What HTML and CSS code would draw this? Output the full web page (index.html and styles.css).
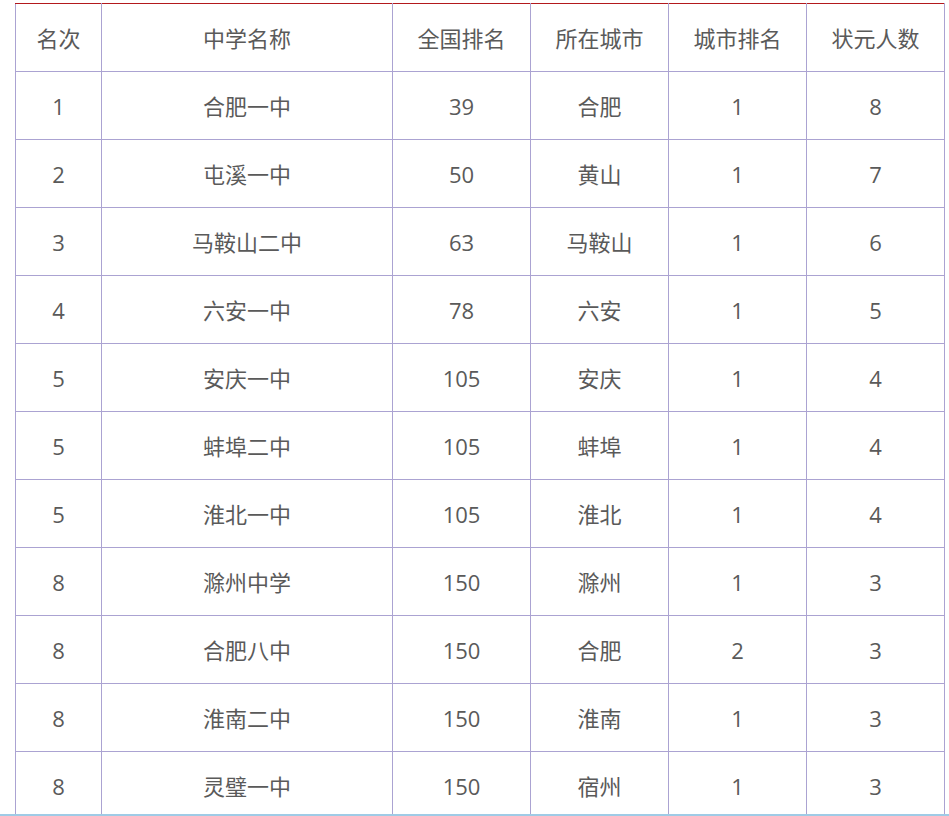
FILE: index.html
```html
<!DOCTYPE html>
<html lang="zh-CN">
<head>
<meta charset="utf-8">
<title>安徽中学排名</title>
<link rel="stylesheet" href="styles.css">
</head>
<body>
<table class="rank">
  <colgroup>
    <col class="c1"><col class="c2"><col class="c3"><col class="c4"><col class="c5"><col class="c6">
  </colgroup>
  <thead>
    <tr><th>名次</th><th>中学名称</th><th>全国排名</th><th>所在城市</th><th>城市排名</th><th>状元人数</th></tr>
  </thead>
  <tbody>
    <tr><td>1</td><td>合肥一中</td><td>39</td><td>合肥</td><td>1</td><td>8</td></tr>
    <tr><td>2</td><td>屯溪一中</td><td>50</td><td>黄山</td><td>1</td><td>7</td></tr>
    <tr><td>3</td><td>马鞍山二中</td><td>63</td><td>马鞍山</td><td>1</td><td>6</td></tr>
    <tr><td>4</td><td>六安一中</td><td>78</td><td>六安</td><td>1</td><td>5</td></tr>
    <tr><td>5</td><td>安庆一中</td><td>105</td><td>安庆</td><td>1</td><td>4</td></tr>
    <tr><td>5</td><td>蚌埠二中</td><td>105</td><td>蚌埠</td><td>1</td><td>4</td></tr>
    <tr><td>5</td><td>淮北一中</td><td>105</td><td>淮北</td><td>1</td><td>4</td></tr>
    <tr><td>8</td><td>滁州中学</td><td>150</td><td>滁州</td><td>1</td><td>3</td></tr>
    <tr><td>8</td><td>合肥八中</td><td>150</td><td>合肥</td><td>2</td><td>3</td></tr>
    <tr><td>8</td><td>淮南二中</td><td>150</td><td>淮南</td><td>1</td><td>3</td></tr>
    <tr><td>8</td><td>灵璧一中</td><td>150</td><td>宿州</td><td>1</td><td>3</td></tr>
  </tbody>
</table>
<div class="edge"></div>
</body>
</html>
```
FILE: styles.css
```css
html, body {
  margin: 0;
  padding: 0;
  background: #ffffff;
}
body {
  padding: 3px 0 0 15px;
  font-family: "Open Sans", "Noto Sans CJK SC", sans-serif;
  color: #5a5a5a;
}
.rank {
  border-collapse: collapse;
  table-layout: fixed;
  width: 930px;
  font-size: 22px;
}
.c1 { width: 86px; }
.c2 { width: 291px; }
.c3 { width: 138px; }
.c4 { width: 138px; }
.c5 { width: 138px; }
.c6 { width: 138px; }
.rank th,
.rank td {
  border: 1px solid #aba3d2;
  height: 67px;
  padding: 0;
  text-align: center;
  vertical-align: middle;
  font-weight: normal;
  line-height: 1;
}
.rank thead th {
  border-top: 1px solid #b3191d;
}
.edge {
  position: fixed;
  left: 0;
  right: 0;
  bottom: 0;
  height: 2px;
  background: #9fcbe6;
}
```
